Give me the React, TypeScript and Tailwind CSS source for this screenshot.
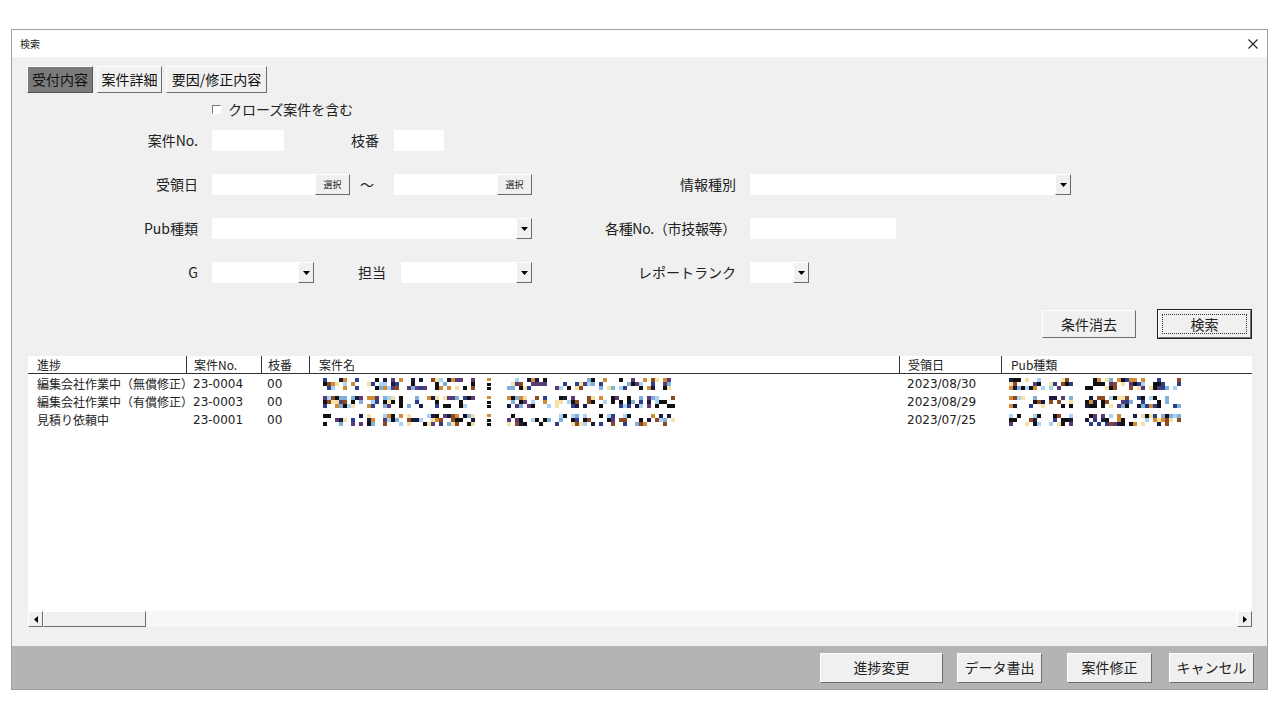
import React from "react";

const FONT = { fontFamily: '"Noto Sans CJK JP", "Noto Sans", sans-serif' };
const NUM = { fontFamily: '"DejaVu Sans", "Noto Sans CJK JP", sans-serif' };

function rng(seed: number) {
  let s = seed >>> 0;
  return () => {
    s = (s * 1664525 + 1013904223) >>> 0;
    return s / 4294967296;
  };
}

const PALETTE = ["#111111", "#1b1b3f", "#2c3e8c", "#d38b34", "#f3e2a6", "#a9d3f2", "#5b3a78", "#8b4a22", "#111111", "#7fb0dc"];

function Noise({ seed, width, gaps, marker }: { seed: number; width: number; gaps: number[]; marker?: number }) {
  const r = rng(seed);
  const cols = Math.floor(width / 4);
  const rects: React.ReactElement[] = [];
  for (let c = 0; c < cols; c++) {
    if (c === marker) {
      rects.push(<rect key={`m${c}a`} x={c * 4} y={0} width={4} height={3} fill="#d38b34" />);
      rects.push(<rect key={`m${c}b`} x={c * 4} y={5} width={4} height={3} fill="#111" />);
      rects.push(<rect key={`m${c}c`} x={c * 4} y={9} width={4} height={3} fill="#111" />);
      continue;
    }
    if (gaps.includes(c)) continue;
    for (let row = 0; row < 3; row++) {
      const v = r();
      if (v < 0.5) {
        const color = PALETTE[Math.floor(r() * PALETTE.length)];
        rects.push(<rect key={`${c}-${row}`} x={c * 4} y={row * 4} width={4} height={4} fill={color} />);
      }
    }
  }
  return (
    <svg width={width} height={12} className="block">
      {rects}
    </svg>
  );
}

function Input({ w, children }: { w: number; children?: React.ReactNode }) {
  return (
    <div className="h-[21px] bg-white flex justify-end items-stretch shrink-0" style={{ width: w }}>
      {children}
    </div>
  );
}

function DropBtn() {
  return (
    <div className="w-[16px] h-[21px] bg-[#f0f0f0] border-t border-l border-t-white border-l-white border-r border-b border-r-[#696969] border-b-[#696969] flex items-center justify-center">
      <svg width="7" height="4" viewBox="0 0 7 4">
        <path d="M0 0 L7 0 L3.5 4 Z" fill="#000" />
      </svg>
    </div>
  );
}

function Combo({ w }: { w: number }) {
  return (
    <Input w={w}>
      <DropBtn />
    </Input>
  );
}

function SelBtn() {
  return (
    <div className="w-[35px] h-[21px] bg-[#f0f0f0] border-t border-l border-t-white border-l-white border-r border-b border-r-[#696969] border-b-[#696969] flex items-center justify-center text-[9px] text-[#222]">
      選択
    </div>
  );
}

function Label({ w, children, align = "right", className = "" }: { w: number; children: React.ReactNode; align?: "right" | "center" | "left"; className?: string }) {
  return (
    <div
      className={`shrink-0 text-[14px] text-[#222] leading-[21px] whitespace-nowrap ${align === "right" ? "text-right" : align === "center" ? "text-center" : "text-left"} ${className}`}
      style={{ width: w }}
    >
      {children}
    </div>
  );
}

function RaisedBtn({ w, h, children, focus, className = "" }: { w: number; h: number; children: React.ReactNode; focus?: boolean; className?: string }) {
  return (
    <div
      className={`shrink-0 bg-[#f0f0f0] border border-t-white border-l-white border-r-[#6d6d6d] border-b-[#6d6d6d] flex items-center justify-center text-[14px] text-[#222] ${focus ? "outline outline-1 outline-[#222]" : ""} ${className}`}
      style={{ width: w, height: h }}
    >
      {focus ? (
        <div className="border border-dotted border-[#333] w-[calc(100%-6px)] h-[calc(100%-6px)] flex items-center justify-center">{children}</div>
      ) : (
        children
      )}
    </div>
  );
}

const rows = [
  { p: "編集会社作業中（無償修正）", no: "23-0004", b: "00", d: "2023/08/30", s: 11, s2: 21 },
  { p: "編集会社作業中（有償修正）", no: "23-0003", b: "00", d: "2023/08/29", s: 37, s2: 45 },
  { p: "見積り依頼中", no: "23-0001", b: "00", d: "2023/07/25", s: 73, s2: 91 },
];

export default function App() {
  return (
    <div className="w-[1280px] h-[720px] bg-white overflow-hidden" style={FONT}>
      <div className="ml-[11px] mt-[29px] w-[1257px] h-[661px] border border-[#a0a0a0] flex flex-col bg-[#f0f0f0]">
        {/* title bar */}
        <div className="h-[27px] bg-white flex items-center justify-between pl-[8px] pr-[9px] shrink-0">
          <span className="text-[10px] text-[#222]">検索</span>
          <svg width="10" height="10" viewBox="0 0 10 10">
            <path d="M0.5 0.5 L9.5 9.5 M9.5 0.5 L0.5 9.5" stroke="#222" strokeWidth="1.1" />
          </svg>
        </div>
        {/* body */}
        <div className="flex-1 flex flex-col">
          {/* tabs */}
          <div className="flex gap-[4px] pl-[15px] mt-[9px]">
            <div className="w-[66px] h-[27px] bg-[#7b7b7b] border border-t-white border-l-white border-r-[#555] border-b-[#555] flex items-center justify-center text-[14px] text-[#111]">受付内容</div>
            <div className="w-[65px] h-[27px] bg-[#f0f0f0] border border-t-white border-l-white border-r-[#6d6d6d] border-b-[#6d6d6d] flex items-center justify-center text-[14px] text-[#111]">案件詳細</div>
            <div className="w-[101px] h-[27px] bg-[#f0f0f0] border border-t-white border-l-white border-r-[#6d6d6d] border-b-[#6d6d6d] flex items-center justify-center text-[14px] text-[#111]">要因/修正内容</div>
          </div>
          {/* checkbox */}
          <div className="flex items-center pl-[200px] mt-[7px] h-[19px]">
            <div className="w-[9px] h-[9px] bg-white border border-t-[#777] border-l-[#777] border-r-white border-b-white" />
            <span className="ml-[7px] text-[14px] text-[#222]">クローズ案件を含む</span>
          </div>
          {/* row 1 */}
          <div className="flex items-center mt-[11px]">
            <Label w={186}>案件No.</Label>
            <div className="w-[14px]" />
            <Input w={72} />
            <Label w={95}>枝番</Label>
            <div className="w-[15px]" />
            <Input w={50} />
          </div>
          {/* row 2 */}
          <div className="flex items-center mt-[23px]">
            <Label w={186}>受領日</Label>
            <div className="w-[14px]" />
            <Input w={138}>
              <SelBtn />
            </Input>
            <Label w={44} align="left" className="pl-[10px]">～</Label>
            <Input w={138}>
              <SelBtn />
            </Input>
            <Label w={204}>情報種別</Label>
            <div className="w-[14px]" />
            <Combo w={321} />
          </div>
          {/* row 3 */}
          <div className="flex items-center mt-[23px]">
            <Label w={186}>Pub種類</Label>
            <div className="w-[14px]" />
            <Combo w={320} />
            <Label w={204} className="tracking-[-0.3px]">各種No.（市技報等）</Label>
            <div className="w-[14px]" />
            <Input w={146} />
          </div>
          {/* row 4 */}
          <div className="flex items-center mt-[23px]">
            <Label w={186}>G</Label>
            <div className="w-[14px]" />
            <Combo w={102} />
            <Label w={72}>担当</Label>
            <div className="w-[15px]" />
            <Combo w={131} />
            <Label w={204}>レポートランク</Label>
            <div className="w-[14px]" />
            <Combo w={59} />
          </div>
          {/* action buttons */}
          <div className="flex justify-end items-center pr-[16px] mt-[27px] gap-[22px]">
            <RaisedBtn w={94} h={28}>条件消去</RaisedBtn>
            <RaisedBtn w={93} h={28} focus>検索</RaisedBtn>
          </div>
          {/* list */}
          <div className="ml-[16px] mr-[15px] mt-[18px] flex flex-col">
            <div className="h-[255px] bg-white flex flex-col">
              <div className="h-[18px] flex items-end text-[12px] text-[#222] border-b border-[#333] leading-[17px]">
                <div className="w-[158px] pl-[9px] h-[17px]">進捗</div>
                <div className="w-[75px] pl-[7px] h-[17px] border-l border-[#333]">案件No.</div>
                <div className="w-[48px] pl-[6px] h-[17px] border-l border-[#333]">枝番</div>
                <div className="w-[590px] pl-[9px] h-[17px] border-l border-[#333]">案件名</div>
                <div className="w-[102px] pl-[8px] h-[17px] border-l border-[#333]">受領日</div>
                <div className="flex-1 pl-[9px] h-[17px] border-l border-[#333]">Pub種類</div>
              </div>
              <div className="flex flex-col pt-[1px]">
                {rows.map((r, i) => (
                  <div key={i} className="flex items-center h-[18px] text-[12px] text-[#222]">
                    <div className="w-[158px] pl-[9px] whitespace-nowrap">{r.p}</div>
                    <div className="w-[75px] pl-[7px]" style={NUM}>{r.no}</div>
                    <div className="w-[48px] pl-[6px]" style={NUM}>{r.b}</div>
                    <div className="w-[590px] pl-[14px]">
                      <Noise seed={r.s} width={352} gaps={[10, 20, 38, 39, 40, 42, 43, 44, 45, 57, 68]} marker={41} />
                    </div>
                    <div className="w-[102px] pl-[8px]" style={NUM}>{r.d}</div>
                    <div className="flex-1 pl-[8px]">
                      <Noise seed={r.s2} width={172} gaps={[9, 16, 17, 18]} />
                    </div>
                  </div>
                ))}
              </div>
            </div>
            {/* h scrollbar */}
            <div className="h-[16px] bg-[#f7f7f7] flex items-stretch">
              <div className="w-[15px] bg-[#f0f0f0] border border-t-white border-l-white border-r-[#6d6d6d] border-b-[#6d6d6d] flex items-center justify-center">
                <svg width="4" height="7" viewBox="0 0 4 7">
                  <path d="M4 0 L4 7 L0 3.5 Z" fill="#000" />
                </svg>
              </div>
              <div className="w-[103px] bg-[#f0f0f0] border border-t-white border-l-white border-r-[#6d6d6d] border-b-[#6d6d6d]" />
              <div className="flex-1" />
              <div className="w-[15px] bg-[#f0f0f0] border border-t-white border-l-white border-r-[#6d6d6d] border-b-[#6d6d6d] flex items-center justify-center">
                <svg width="4" height="7" viewBox="0 0 4 7">
                  <path d="M0 0 L0 7 L4 3.5 Z" fill="#000" />
                </svg>
              </div>
            </div>
          </div>
          <div className="flex-1" />
          {/* bottom bar */}
          <div className="h-[43px] bg-[#b4b4b4] flex items-center justify-end pr-[13px] shrink-0">
            <RaisedBtn w={123} h={30}>進捗変更</RaisedBtn>
            <RaisedBtn w={85} h={30} className="ml-[14px]">データ書出</RaisedBtn>
            <RaisedBtn w={85} h={30} className="ml-[25px]">案件修正</RaisedBtn>
            <RaisedBtn w={85} h={30} className="ml-[17px]">キャンセル</RaisedBtn>
          </div>
        </div>
      </div>
    </div>
  );
}
